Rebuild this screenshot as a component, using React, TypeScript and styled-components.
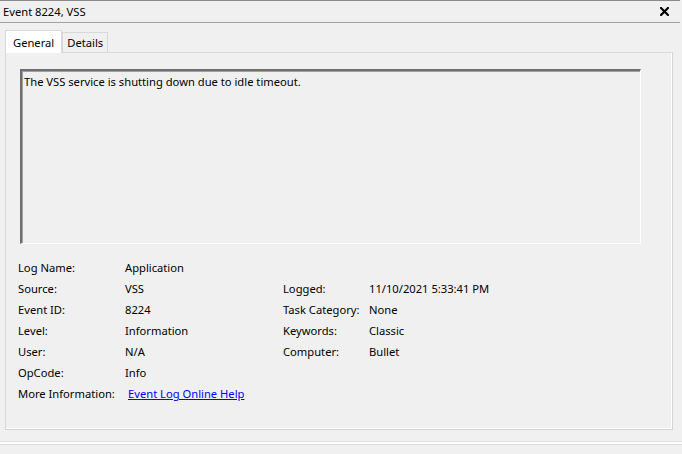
import { createGlobalStyle } from "styled-components";
import styled from "styled-components";
import { Fragment } from "react";

const GlobalStyle = createGlobalStyle`
  html, body {
    margin: 0;
    padding: 0;
    background: #f0f0f0;
  }
  body {
    font-family: "Noto Sans", "Segoe UI", sans-serif;
    font-size: 11.2px;
    color: #000;
  }
`;

const Window = styled.div`
  width: 682px;
  height: 454px;
  display: flex;
  flex-direction: column;
  background: #f0f0f0;
  overflow: hidden;
`;

const TitleBar = styled.div`
  height: 21px;
  margin-right: 2px;
  border-top: 1px solid #8a8a8a;
  border-bottom: 1px solid #a0a0a0;
  display: flex;
  align-items: center;
  justify-content: space-between;
  padding: 0 11px 0 3px;
`;

const Title = styled.span`
  line-height: 20px;
`;

const CloseButton = styled.button`
  border: 0;
  background: none;
  padding: 0;
  width: 10px;
  height: 10px;
  display: flex;
  align-items: center;
  justify-content: center;
`;

const Body = styled.div`
  padding: 7px 9px 0 5px;
`;

const TabStrip = styled.div`
  display: flex;
  align-items: flex-end;
  height: 22px;
`;

const Tab = styled.div<{ $active?: boolean }>`
  height: ${(p) => (p.$active ? 23 : 20)}px;
  box-sizing: border-box;
  padding: 0 ${(p) => (p.$active ? 7 : 4)}px;
  border: 1px solid #d9d9d9;
  border-bottom: 0;
  background: ${(p) => (p.$active ? "#ffffff" : "#f0f0f0")};
  display: flex;
  align-items: center;
  position: relative;
  z-index: ${(p) => (p.$active ? 1 : 0)};
  margin-bottom: ${(p) => (p.$active ? -1 : 0)}px;
`;

const Panel = styled.div`
  height: 378px;
  box-sizing: border-box;
  border: 1px solid #d9d9d9;
  border-right-color: #d4d4d4;
  border-bottom-color: #d4d4d4;
  box-shadow: inset -1px -1px 0 #ffffff;
  padding: 16px 31px 0 14px;
`;

const MessageBox = styled.div`
  height: 175px;
  box-sizing: border-box;
  border-top: 2px solid #6f6f6f;
  border-left: 2px solid #6f6f6f;
  border-right: 1px solid #ffffff;
  border-bottom: 1px solid #ffffff;
  box-shadow: inset 1px 1px 0 #a0a0a0;
  padding: 3px 2px;
  line-height: 15px;
`;

const InfoGrid = styled.div`
  margin: 13px 0 0 -2px;
  display: grid;
  grid-template-columns: 107px 158px 86px auto;
  grid-auto-rows: 21px;
  align-items: center;
`;

const Label = styled.span`
  white-space: nowrap;
`;

const Value = styled.span`
  white-space: nowrap;
`;

const HelpLink = styled.a`
  color: #0000ff;
  text-decoration: underline;
  margin-left: 3px;
  white-space: nowrap;
  cursor: pointer;
`;

const FooterRule = styled.div`
  margin-top: 11px;
  height: 2px;
  border-top: 1px solid #dcdcdc;
  border-bottom: 1px solid #dcdcdc;
  background: #ffffff;
`;

const rows: [string, string, string?, string?][] = [
  ["Log Name:", "Application"],
  ["Source:", "VSS", "Logged:", "11/10/2021 5:33:41 PM"],
  ["Event ID:", "8224", "Task Category:", "None"],
  ["Level:", "Information", "Keywords:", "Classic"],
  ["User:", "N/A", "Computer:", "Bullet"],
  ["OpCode:", "Info"],
];

const App = () => {
  return (
    <>
      <GlobalStyle />
      <Window>
        <TitleBar>
          <Title>Event 8224, VSS</Title>
          <CloseButton aria-label="Close">
            <svg width="9" height="9" viewBox="0 0 9 9">
              <path d="M1 1 L8 8 M8 1 L1 8" stroke="#000" strokeWidth="2.2" strokeLinecap="square" />
            </svg>
          </CloseButton>
        </TitleBar>
        <Body>
          <TabStrip>
            <Tab $active>General</Tab>
            <Tab>Details</Tab>
          </TabStrip>
          <Panel>
            <MessageBox>The VSS service is shutting down due to idle timeout.</MessageBox>
            <InfoGrid>
              {rows.map(([l1, v1, l2, v2]) => (
                <Fragment key={l1}>
                  <Label>{l1}</Label>
                  <Value>{v1}</Value>
                  <Label>{l2 ?? ""}</Label>
                  <Value>{v2 ?? ""}</Value>
                </Fragment>
              ))}
              <Label>More Information:</Label>
              <HelpLink>Event Log Online Help</HelpLink>
            </InfoGrid>
          </Panel>
        </Body>
        <FooterRule />
      </Window>
    </>
  );
};

export default App;
